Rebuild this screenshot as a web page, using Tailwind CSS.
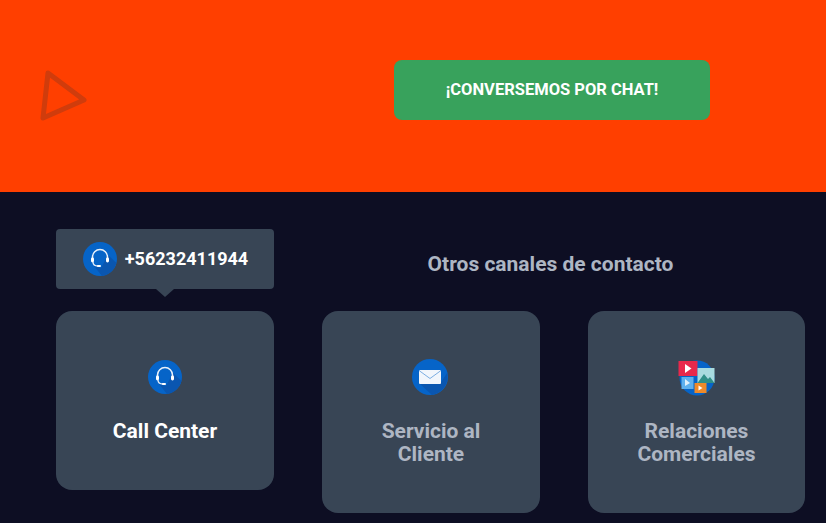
<!DOCTYPE html>
<html lang="es">
<head>
  <meta charset="UTF-8">
  <meta name="viewport" content="width=device-width, initial-scale=1.0">
  <title>Contacto</title>
  <script src="https://cdn.jsdelivr.net/npm/@tailwindcss/browser@4"></script>
</head>
<body class="bg-[#0d0e23] h-[523px] overflow-hidden font-['Roboto',sans-serif]">

  <!-- Banner naranja -->
  <section class="relative bg-[#ff3f00] h-[192px] pt-[60px] pl-[394px]">
    <svg class="absolute left-[38px] top-[68px] blur-[0.5px]" width="52" height="54" viewBox="38 68 52 54" fill="none">
      <path d="M48 73 L84 100 L43 118 Z" stroke="#d03c0c" stroke-width="5" stroke-linejoin="round"/>
    </svg>
    <a href="#" class="flex items-center justify-center w-[316px] h-[60px] rounded-[8px] bg-[#38a25c] text-white font-bold text-[16.5px]">¡CONVERSEMOS POR CHAT!</a>
  </section>

  <!-- Canales -->
  <section class="pt-[37px] pl-[56px]">
    <div class="flex items-start">
      <div class="relative flex items-center justify-center gap-[7px] w-[218px] h-[60px] rounded-[4px] bg-[#384555]">
        <svg width="36" height="36" viewBox="0 0 36 36" fill="none">
          <circle cx="18" cy="18" r="17" fill="#0664c8"/>
          <path d="M12 25 L19 27 L26 14 L34.5 22 A17 17 0 0 1 20 35 Z" fill="#0a56b0"/>
          <path d="M10.5 19 V16 a7.5 7.5 0 0 1 15 0 V19" stroke="#e8f0fa" stroke-width="1.5"/>
          <rect x="9" y="16.5" width="3" height="5" rx="1.4" fill="#fff"/>
          <rect x="24" y="16.5" width="3" height="5" rx="1.4" fill="#fff"/>
          <path d="M11 21 q0 4 5 4" stroke="#e8f0fa" stroke-width="1.3"/>
          <rect x="15" y="24" width="4" height="2" rx="1" fill="#fff"/>
        </svg>
        <span class="text-white font-bold text-[18px] mb-[1px]">+56232411944</span>
        <span class="absolute left-1/2 -translate-x-1/2 top-[60px] w-0 h-0 border-x-[9px] border-x-transparent border-t-[8px] border-t-[#384555]"></span>
      </div>
      <h3 class="w-[481px] text-center mt-[22px] pl-[72px] text-[#aeb6c3] font-bold text-[21px] leading-[27px]">Otros canales de contacto</h3>
    </div>

    <div class="flex items-start gap-[48px] mt-[22px]">
      <div class="w-[218px] h-[179px] rounded-[16px] bg-[#384555] flex flex-col items-center pt-[48px]">
        <svg width="36" height="36" viewBox="0 0 36 36" fill="none">
          <circle cx="18" cy="18" r="17" fill="#0664c8"/>
          <path d="M12 25 L19 27 L26 14 L34.5 22 A17 17 0 0 1 20 35 Z" fill="#0a56b0"/>
          <path d="M10.5 19 V16 a7.5 7.5 0 0 1 15 0 V19" stroke="#e8f0fa" stroke-width="1.5"/>
          <rect x="9" y="16.5" width="3" height="5" rx="1.4" fill="#fff"/>
          <rect x="24" y="16.5" width="3" height="5" rx="1.4" fill="#fff"/>
          <path d="M11 21 q0 4 5 4" stroke="#e8f0fa" stroke-width="1.3"/>
          <rect x="15" y="24" width="4" height="2" rx="1" fill="#fff"/>
        </svg>
        <p class="mt-[25px] text-white font-bold text-[21px] leading-[23px] text-center">Call Center</p>
      </div>

      <div class="w-[218px] h-[202px] rounded-[16px] bg-[#384555] flex flex-col items-center pt-[48px]">
        <svg class="mr-[2px]" width="36" height="36" viewBox="0 0 36 36" fill="none">
          <circle cx="18" cy="18" r="18" fill="#0664c8"/>
          <path d="M7 24 L28 25 L35 14 A18 18 0 0 1 20 35.9 Z" fill="#0a56b0"/>
          <rect x="7" y="11" width="22" height="14" rx="1" fill="#f2f6fc"/>
          <path d="M7 11.5 L18 19.5 L29 11.5" stroke="#0664c8" stroke-width="1" stroke-opacity="0.5"/>
        </svg>
        <p class="mt-[25px] text-[#aeb6c3] font-bold text-[21px] leading-[23px] text-center">Servicio al<br>Cliente</p>
      </div>

      <div class="w-[217px] h-[202px] rounded-[16px] bg-[#384555] flex flex-col items-center pt-[48px]">
        <svg width="38" height="38" viewBox="0 0 38 38" fill="none" class="mb-[-2px]">
          <circle cx="19" cy="19" r="17.5" fill="#0664c8"/>
          <rect x="0.5" y="2" width="19" height="15" fill="#e8284c"/>
          <path d="M7 5 L13.5 9.5 L7 14 Z" fill="#fff"/>
          <rect x="19.5" y="9" width="17" height="15" fill="#a8dbe0"/>
          <path d="M19.5 24 L26 15 L30 20 L32 18 L36.5 24 Z" fill="#2f8f88"/>
          <rect x="3.5" y="18" width="12" height="12" fill="#5eb0ee"/>
          <path d="M7 20 L12 24 L7 27 Z" fill="#dff0fc"/>
          <rect x="16.5" y="24" width="12" height="10" fill="#ee8a2a"/>
          <path d="M20.5 26.5 L24.5 29 L20.5 31.5 Z" fill="#fff"/>
        </svg>
        <p class="mt-[25px] text-[#aeb6c3] font-bold text-[21px] leading-[23px] text-center">Relaciones<br>Comerciales</p>
      </div>
    </div>
  </section>
</body>
</html>
